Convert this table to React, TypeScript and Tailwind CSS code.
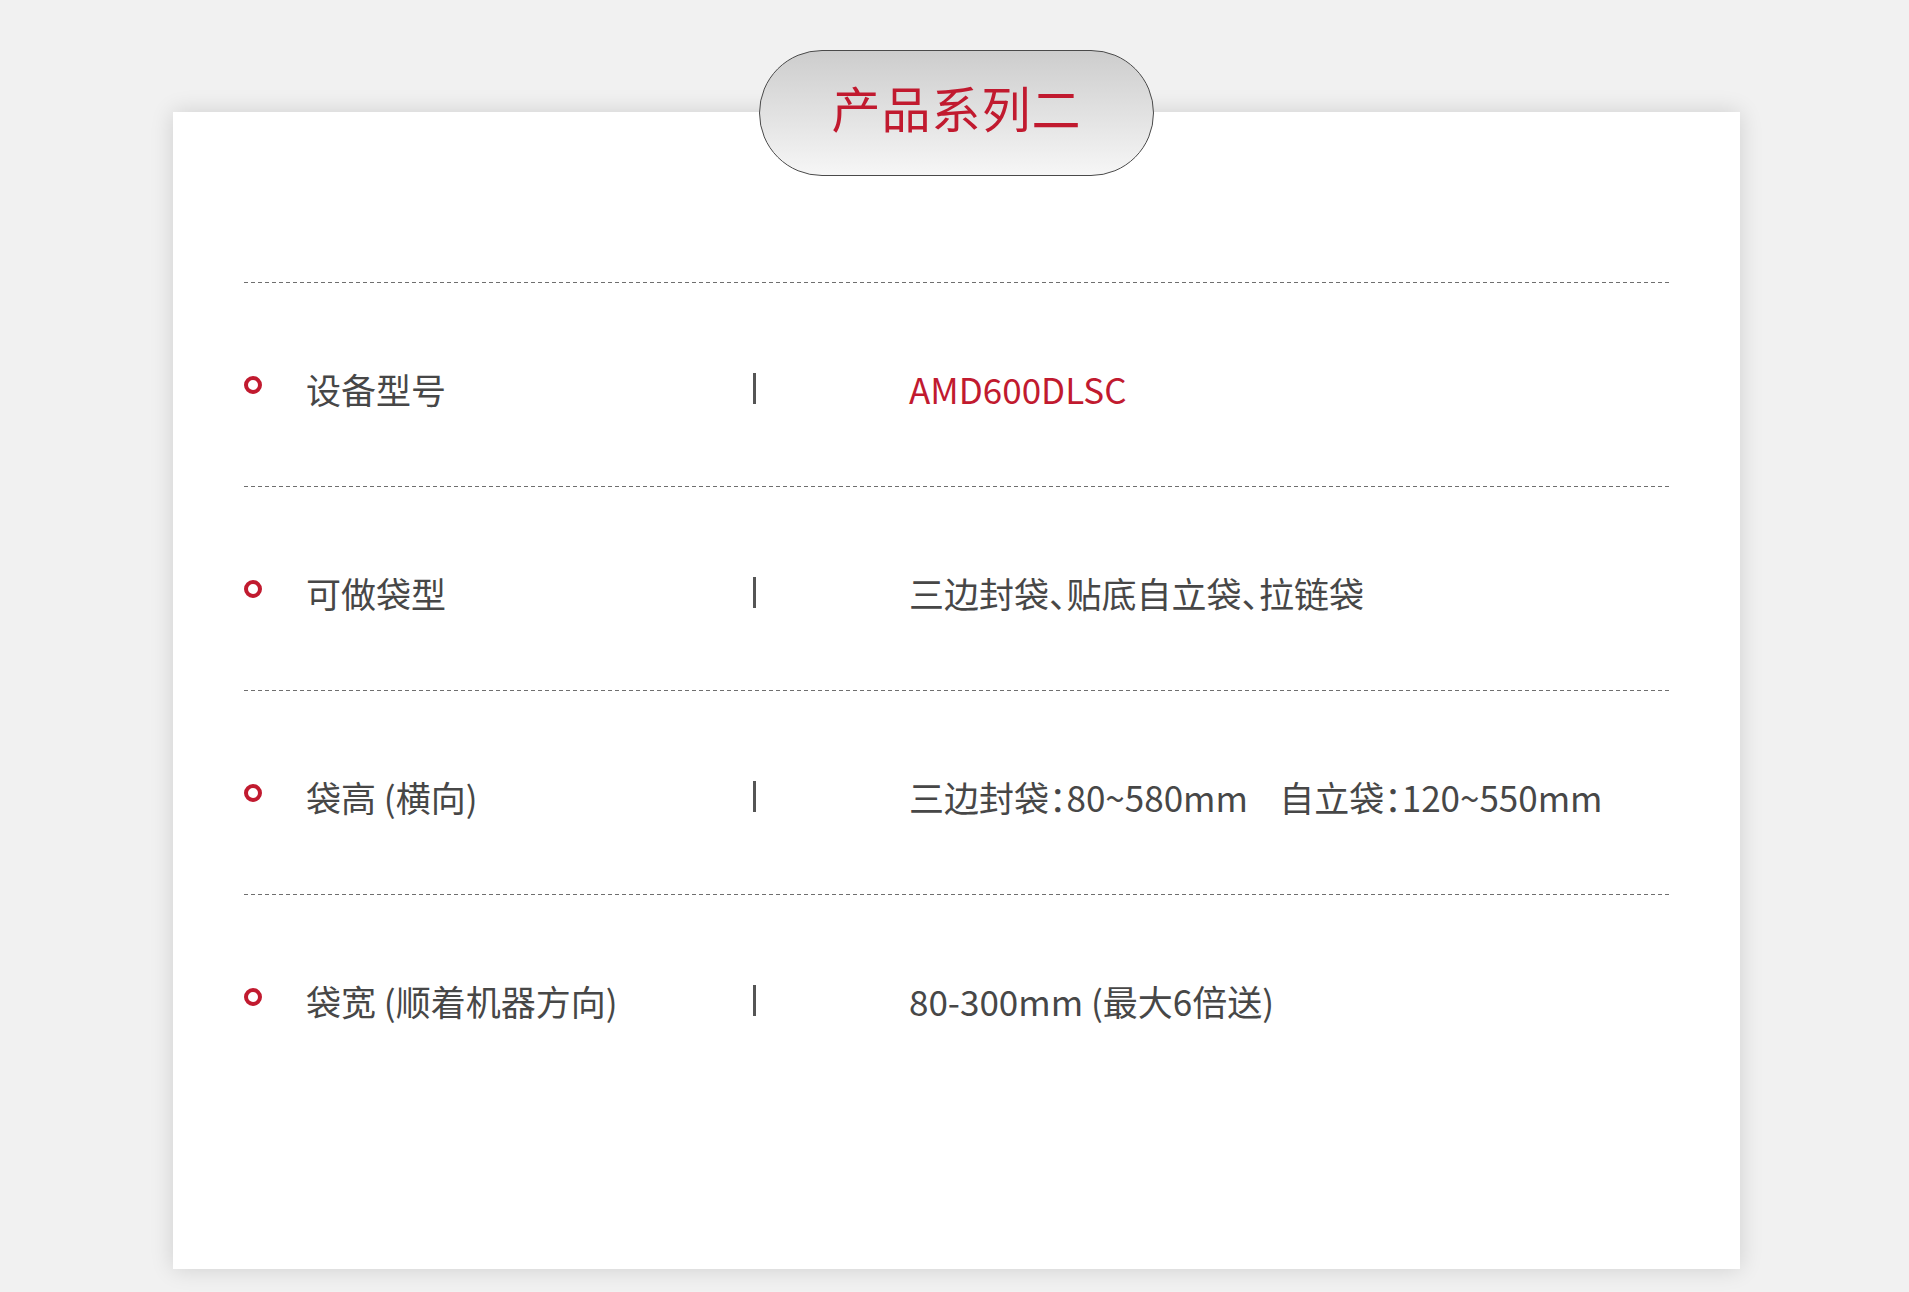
const specs = [
  { label: "设备型号", value: "AMD600DLSC", red: true },
  { label: "可做袋型", value: "三边封袋、贴底自立袋、拉链袋" },
  { label: "袋高 (横向)", value: "三边封袋：80~580mm\u00a0\u00a0\u00a0\u00a0自立袋：120~550mm" },
  { label: "袋宽 (顺着机器方向)", value: "80-300mm (最大6倍送)" },
];

const Row = ({ label, value, red }: { label: string; value: string; red?: boolean }) => (
  <div>
    <div className="h-px bg-[repeating-linear-gradient(90deg,#6f6f6f_0_4px,transparent_4px_7px)]" />
    <div className="h-[203px] grid grid-cols-[62px_447px_156px_1fr] items-center pt-[8px]">
      <span className="w-[18px] h-[18px] mb-[8px] rounded-full border-[4px] border-[#c11a2f]" />
      <span className="text-[35px] leading-none text-[#474747]">{label}</span>
      <span className="w-[3px] h-[31px] bg-[#555]" />
      <span
        className={`text-[35px] leading-none whitespace-pre [font-feature-settings:'halt'] ${
          red ? "text-[#c11a2f]" : "text-[#474747]"
        }`}
      >
        {value}
      </span>
    </div>
  </div>
);

export default function App() {
  return (
    <div
      className="min-h-[1292px] bg-[#f1f1f1] pt-[50px]"
      style={{ fontFamily: '"Noto Sans CJK SC", "Noto Sans", sans-serif' }}
    >
      <div className="ml-[173px] w-[1567px]">
        <div className="relative z-10 flex justify-center">
          <div className="w-[395px] h-[126px] rounded-full border border-[#4a4a4a] bg-gradient-to-b from-[#cdcdcd] to-[#f6f6f6] flex items-center justify-center pb-[14px]">
            <h2 className="text-[49px] leading-none tracking-[1px] text-[#c11a2f]">产品系列二</h2>
          </div>
        </div>
        <div className="-mt-[64px] h-[1157px] bg-white shadow-[0_0_22px_rgba(0,0,0,0.14)] pt-[170px] px-[71px]">
          {specs.map((s) => (
            <Row key={s.label} {...s} />
          ))}
        </div>
      </div>
    </div>
  );
}
